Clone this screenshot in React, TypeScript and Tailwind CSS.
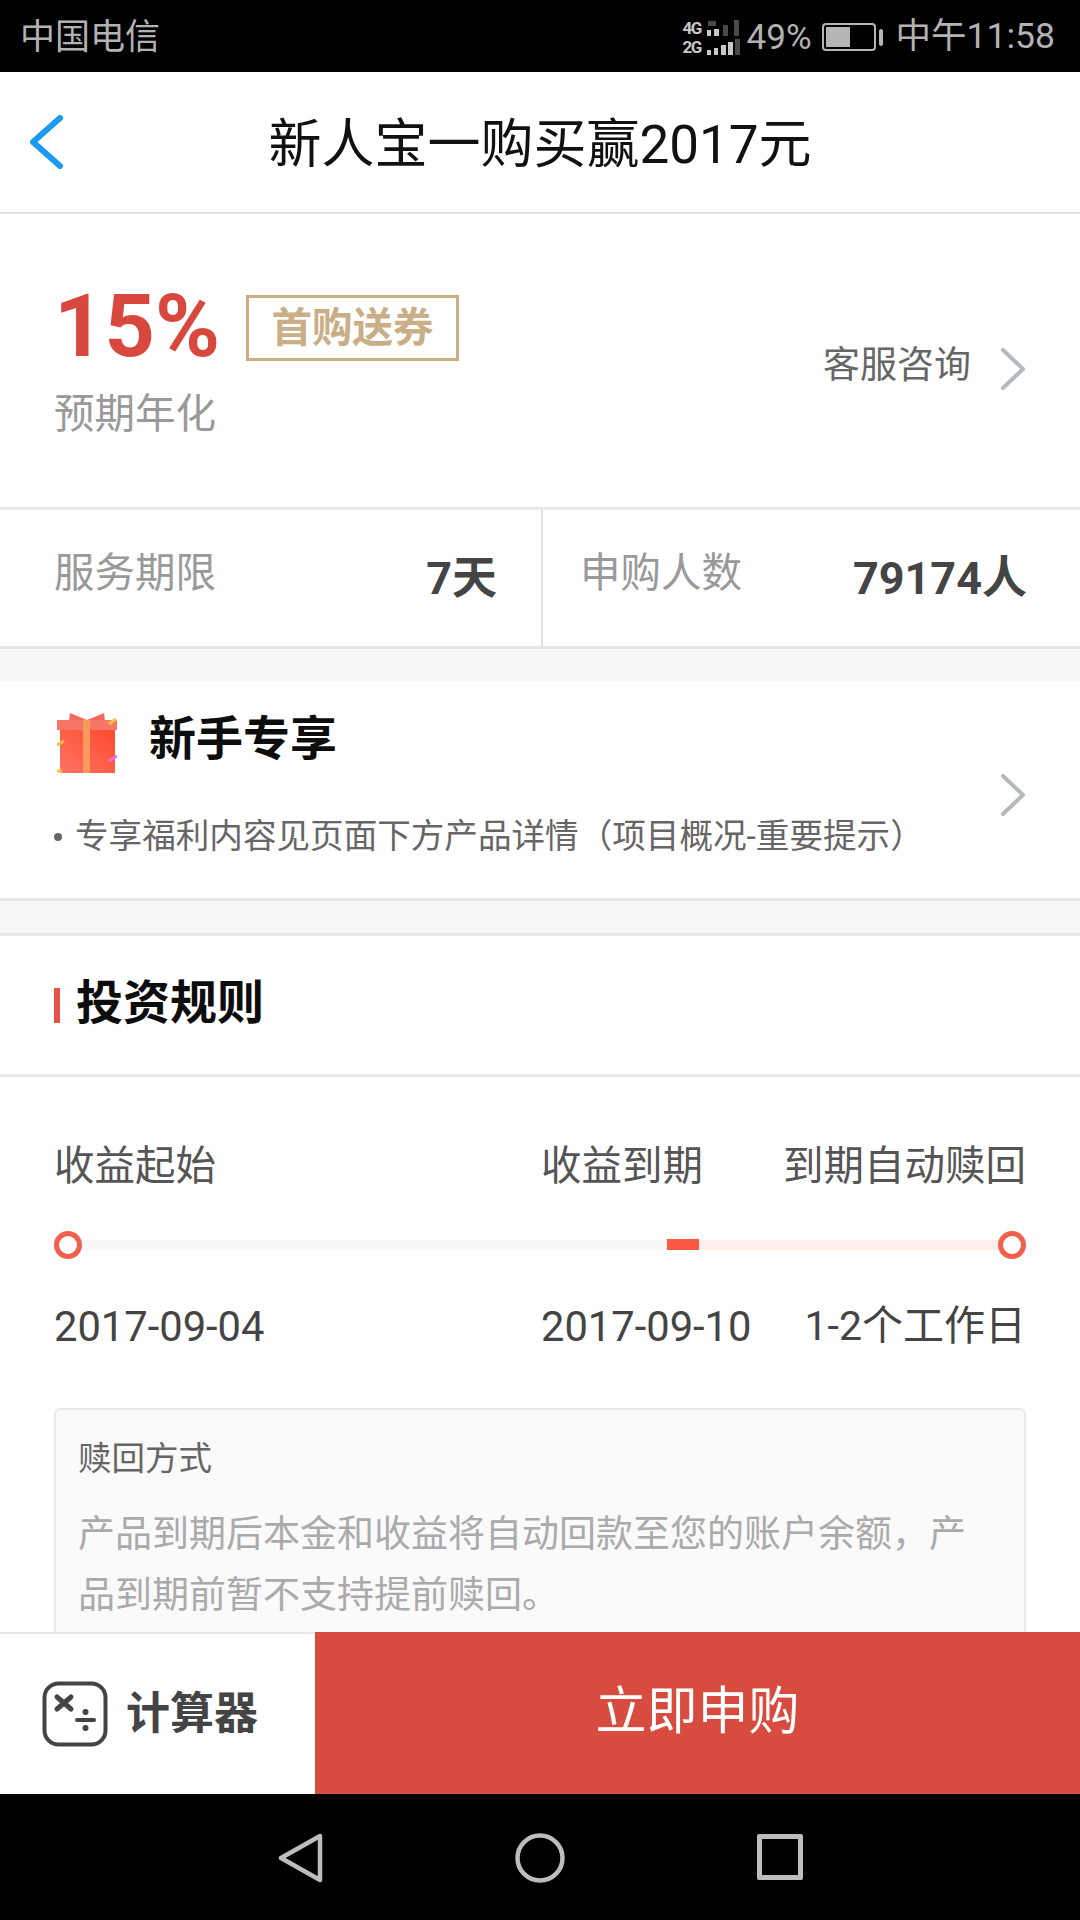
const cjk = "font-['Roboto','Noto_Sans_CJK_SC',sans-serif]";

const Chevron = ({ className }: { className: string }) => (
  <svg viewBox="0 0 26 42" className={className} fill="none" stroke="#b4b9bd" strokeWidth="4" strokeLinecap="round" strokeLinejoin="round">
    <path d="M3 2 L23 21 L3 40" />
  </svg>
);

const SignalIcon = () => (
  <div className="flex flex-col w-[58px] h-[35px] gap-[3px] text-[#c8c8c8] text-[17px] font-bold leading-[16px] tracking-[-1.5px] font-['Roboto',sans-serif]">
    <div className="flex items-center gap-[2px] h-[16px]">
      <span className="w-[20px]">4G</span>
      <svg viewBox="0 0 36 16" className="w-[36px] h-[16px]" fill="#c8c8c8">
        <rect x="2" y="10" width="4" height="6" />
        <rect x="9" y="9" width="5" height="7" />
        <rect x="18" y="5" width="5" height="11" fill="#4a4a4a" />
        <rect x="29" y="0" width="5" height="16" fill="#4a4a4a" />
        <rect x="3" y="1" width="8" height="5" fill="#4a4a4a" />
      </svg>
    </div>
    <div className="flex items-center gap-[2px] h-[16px]">
      <span className="w-[20px]">2G</span>
      <svg viewBox="0 0 36 16" className="w-[36px] h-[16px]" fill="#c8c8c8">
        <rect x="2" y="11" width="4" height="5" />
        <rect x="9" y="9" width="4" height="7" />
        <rect x="16" y="6" width="5" height="10" />
        <rect x="23" y="3" width="5" height="13" />
        <rect x="30" y="0" width="5" height="16" fill="#4a4a4a" />
      </svg>
    </div>
  </div>
);

const Battery = () => (
  <div className="flex items-center gap-[3px]">
    <div className="w-[54px] h-[28px] rounded-[4px] border-2 border-[#b5b5b5] p-[2px]">
      <div className="w-[24px] h-full bg-[#b5b5b5]" />
    </div>
    <div className="w-[4px] h-[17px] rounded-full bg-[#b5b5b5]" />
  </div>
);

const GiftIcon = () => (
  <svg viewBox="0 0 60 60" className="w-[60px] h-[60px]">
    <defs>
      <linearGradient id="giftBody" x1="0" y1="1" x2="1" y2="0">
        <stop offset="0" stopColor="#ff7464" />
        <stop offset="1" stopColor="#fd4a2d" />
      </linearGradient>
    </defs>
    <path d="M13 0 L30 7 L47 0 L48 8 L12 8 Z" fill="#f4695c" />
    <rect x="0" y="7" width="60" height="10" fill="#f77567" />
    <rect x="3" y="17" width="55" height="43" fill="url(#giftBody)" />
    <rect x="26" y="7" width="7" height="53" fill="#f79a5c" />
    <path d="M52 11 L59 6" stroke="#f7c13f" strokeWidth="3" />
    <path d="M0 32 L7 28" stroke="#f7c13f" strokeWidth="3" />
    <path d="M52 48 L60 43" stroke="#ee6fe0" strokeWidth="3" />
    <path d="M0 58 L5 58" stroke="#f7c13f" strokeWidth="3" />
  </svg>
);

const CalcIcon = () => (
  <svg viewBox="0 0 66 66" className="w-[66px] h-[66px]" fill="none" stroke="#444" strokeLinecap="round">
    <rect x="2.5" y="2.5" width="61" height="61" rx="14" strokeWidth="4" />
    <path d="M15 16 L29 28 M29 16 L15 28" strokeWidth="5" />
    <path d="M35 39 L52 39" strokeWidth="4" />
    <circle cx="43.5" cy="31" r="3" fill="#444" stroke="none" />
    <circle cx="43.5" cy="47" r="3" fill="#444" stroke="none" />
  </svg>
);

export default function App() {
  return (
    <div className={`w-[1080px] h-[1920px] flex flex-col overflow-hidden bg-white ${cjk}`}>
      {/* status bar */}
      <div className="h-[72px] shrink-0 bg-black flex items-center pl-[20px] pr-[25px] pt-[2px] text-[#b2b2b2]">
        <span className="text-[35px] leading-none">中国电信</span>
        <div className="ml-auto flex items-center">
          <SignalIcon />
          <span className="ml-[6px] text-[35px] leading-none">49%</span>
          <div className="ml-[10px]"><Battery /></div>
          <span className="ml-[13px] text-[35.5px] leading-none">中午11:58</span>
        </div>
      </div>

      {/* title bar */}
      <div className="h-[142px] shrink-0 flex items-center justify-center relative border-b-2 border-[#e2e2e2]">
        <svg viewBox="0 0 34 54" className="absolute left-[29px] top-[43px] w-[34px] h-[54px]" fill="none" stroke="#1a9af2" strokeWidth="6" strokeLinecap="round" strokeLinejoin="round">
          <path d="M31 3 L4 27 L31 51" />
        </svg>
        <h1 className="text-[53px] leading-none text-[#111] font-normal pt-[6px]">新人宝一购买赢2017元</h1>
      </div>

      <main className="flex-1 min-h-0 overflow-hidden">
        {/* rate */}
        <section className="h-[296px] flex items-start pl-[54px] pr-[54px] pt-[68px] border-b-[3px] border-[#e8e8e8]">
          <div>
            <div className="flex items-center h-[88px]">
              <span className="text-[88px] font-bold leading-none text-[#d9483f] font-['Roboto',sans-serif]">15%</span>
              <span className="ml-[26px] mt-[4px] w-[213px] h-[66px] flex items-center justify-center border-[3px] border-[#c9ae87] text-[40.5px] leading-none font-bold text-[#c9ae87]">首购送券</span>
            </div>
            <div className="mt-[16px] text-[40.5px] leading-[56px] text-[#999]">预期年化</div>
          </div>
          <div className="ml-auto mt-[66px] flex items-center gap-[29px]">
            <span className="text-[37px] leading-none text-[#666] -mt-[8px]">客服咨询</span>
            <Chevron className="w-[26px] h-[42px]" />
          </div>
        </section>

        {/* term and buyers */}
        <section className="h-[139px] flex border-b-[3px] border-[#e6e6e6]">
          <div className="w-[543px] flex items-center justify-between pl-[54px] pr-[44px] border-r-2 border-[#e2e2e2]">
            <span className="text-[40.5px] leading-none text-[#999] -mt-[10px]">服务期限</span>
            <span className="text-[45px] leading-none font-bold text-[#444]">7天</span>
          </div>
          <div className="flex-1 flex items-center justify-between pl-[37px] pr-[53px]">
            <span className="text-[40.5px] leading-none text-[#999] -mt-[10px]">申购人数</span>
            <span className="text-[45px] leading-none font-bold text-[#444]">79174人</span>
          </div>
        </section>

        <div className="h-[32px] bg-[#f6f6f6]" />

        {/* newcomer */}
        <section className="h-[220px] flex pl-[54px] pr-[54px] pt-[30px] border-b-[3px] border-[#e6e6e6]">
          <div className="flex-1">
            <div className="flex items-center h-[64px]">
              <div className="ml-[3px]"><GiftIcon /></div>
              <span className="ml-[32px] -mt-[10px] text-[47px] leading-none font-bold text-[#0d0d0d]">新手专享</span>
            </div>
            <div className="mt-[45px] flex items-center text-[33.6px] leading-none text-[#666]">
              <span className="w-[8px] h-[8px] rounded-full bg-[#666] mr-[13px]" />
              专享福利内容见页面下方产品详情（项目概况-重要提示）
            </div>
          </div>
          <Chevron className="w-[26px] h-[42px] shrink-0 mt-[63px]" />
        </section>

        <div className="h-[35px] bg-[#f6f6f6] border-b-[3px] border-[#e6e6e6]" />

        {/* rules */}
        <section className="h-[141px] flex items-center pl-[54px] border-b-[3px] border-[#e8e8e8]">
          <span className="w-[6px] h-[35px] bg-[#e8504a]" />
          <h2 className="ml-[16px] -mt-[5px] text-[47px] leading-none font-bold text-[#0d0d0d]">投资规则</h2>
        </section>

        <section className="px-[54px] pt-[69px]">
          <div className="grid grid-cols-[487px_1fr_auto] text-[40.5px] leading-none text-[#555]">
            <span>收益起始</span>
            <span>收益到期</span>
            <span>到期自动赎回</span>
          </div>

          <div className="mt-[44px] flex items-center h-[28px]">
            <span className="w-[28px] h-[28px] shrink-0 rounded-full border-[5px] border-[#f2604c] bg-white" />
            <span className="flex-1 h-[10px] bg-[#f8f8f8]" />
            <span className="w-[32px] h-[11px] bg-[#fb5a42]" />
            <span className="w-[299px] h-[10px] bg-[#fdeeeb]" />
            <span className="w-[28px] h-[28px] shrink-0 rounded-full border-[5px] border-[#f2604c] bg-white" />
          </div>

          <div className="mt-[47px] grid grid-cols-[487px_1fr_auto] text-[41.7px] leading-none text-[#444]">
            <span>2017-09-04</span>
            <span>2017-09-10</span>
            <span className="text-[41px]">1-2个工作日</span>
          </div>

          <div className="mt-[61px] h-[300px] pl-[22px] pr-[30px] pt-[32px] bg-[#fafafa] border-2 border-[#e8e8e8] rounded-[6px]">
            <div className="text-[33.5px] leading-none text-[#666]">赎回方式</div>
            <p className="mt-[28px] text-[37px] leading-[61px] text-[#aaa]">产品到期后本金和收益将自动回款至您的账户余额，产品到期前暂不支持提前赎回。</p>
          </div>
        </section>
      </main>

      {/* bottom actions */}
      <div className="h-[162px] shrink-0 flex border-t-2 border-[#e6e6e6] relative z-10">
        <div className="w-[315px] flex items-center pl-[42px] gap-[18px] bg-white">
          <CalcIcon />
          <span className="text-[44px] leading-none font-bold text-[#444]">计算器</span>
        </div>
        <button className="flex-1 bg-[#d84c40] text-white text-[51px] leading-none -mt-[2px] pb-[4px]">立即申购</button>
      </div>

      {/* nav bar */}
      <div className="h-[126px] shrink-0 bg-black flex items-start pt-[39px] pl-[276px]">
        <svg viewBox="0 0 48 50" className="w-[48px] h-[50px]" fill="none" stroke="#bdbdbd" strokeWidth="4.5" strokeLinejoin="round">
          <path d="M44 3 L44 47 L5 25 Z" />
        </svg>
        <svg viewBox="0 0 50 50" className="ml-[191px] w-[50px] h-[50px]" fill="none" stroke="#bdbdbd" strokeWidth="4.5">
          <circle cx="25" cy="25" r="22.5" />
        </svg>
        <div className="ml-[192px] mt-[1px] w-[46px] h-[46px] rounded-[2px] border-[5px] border-[#bdbdbd]" />
      </div>
    </div>
  );
}
